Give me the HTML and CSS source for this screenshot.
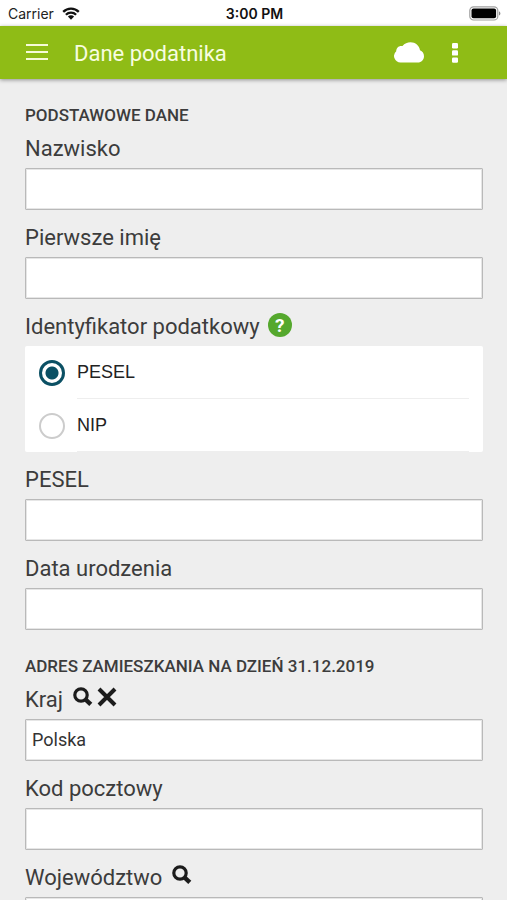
FILE: index.html
```html
<!DOCTYPE html>
<html lang="pl">
<head>
<meta charset="utf-8">
<meta name="viewport" content="width=device-width, initial-scale=1">
<title>Dane podatnika</title>
<link rel="stylesheet" href="styles.css">
</head>
<body>
<svg class="sprite" aria-hidden="true">
  <symbol id="search" viewBox="0 0 20 20">
    <circle cx="8" cy="8" r="6.200" fill="none" stroke="currentColor" stroke-width="3.200"/>
    <path d="M12.400 12.400l5.400 5" fill="none" stroke="currentColor" stroke-width="4.400"/>
  </symbol>
</svg>
<div class="status">
  <div class="carrier">
    <span>Carrier</span>
    <svg width="18" height="13" viewBox="0 0 18 13" aria-hidden="true">
      <g fill="none" stroke="#111" stroke-width="2.3">
        <path d="M1.2 4.9a11 11 0 0 1 15.6 0"/>
        <path d="M3.9 7.8a7.2 7.2 0 0 1 10.2 0"/>
      </g>
      <path d="M9 12.8L5.9 9.6a4.4 4.4 0 0 1 6.2 0z" fill="#111"/>
    </svg>
  </div>
  <div class="time">3:00 PM</div>
  <div class="battery">
    <svg width="32" height="15" viewBox="0 0 32 15" aria-hidden="true">
      <rect x="0.8" y="0.8" width="28" height="13.200" rx="3.8" fill="#fff" stroke="#a0a0a0" stroke-width="1.2"/>
      <rect x="2.500" y="2.500" width="24.600" height="9.800" rx="2" fill="#000"/>
      <path d="M30 5.200C31.900 6 31.900 8.800 30 9.600z" fill="#888"/>
    </svg>
  </div>
</div>
<header class="bar">
  <button class="icon-button" aria-label="Menu">
    <svg width="22" height="18" viewBox="0 0 22 18"><path d="M0 1h22M0 8h22M0 15h22" stroke="#f6fbd8" stroke-width="2"/></svg>
  </button>
  <h1>Dane podatnika</h1>
  <button class="icon-button cloud" aria-label="Chmura">
    <svg width="30" height="21" viewBox="0 0 30 21"><path d="M6.500 20.500A6.500 6.500 0 0 1 2.200 9.200C2.200 5.500 5.300 3.200 8.500 4.100C10.500 1.500 13.500 0.300 16.500 0.300C21.500 0.300 25.300 3.800 26 8.300C28.500 9.300 30 11.500 30 14.200C30 17.700 27.300 20.500 23.800 20.500z" fill="#fff"/></svg>
  </button>
  <button class="icon-button more" aria-label="Więcej">
    <svg width="6" height="20" viewBox="0 0 6 20"><g fill="#fff"><rect width="6" height="5.400" rx="1.200"/><rect y="7.200" width="6" height="5.400" rx="1.200"/><rect y="14.400" width="6" height="5.400" rx="1.200"/></g></svg>
  </button>
</header>
<main>
  <form>
    <h2>PODSTAWOWE DANE</h2>
    <div class="label-row"><label for="surname">Nazwisko</label></div>
    <input class="text" id="surname" type="text">
    <div class="label-row"><label for="name">Pierwsze imię</label></div>
    <input class="text" id="name" type="text">
    <div class="label-row">
      <span id="ident">Identyfikator podatkowy</span>
      <button class="help" type="button" aria-label="Pomoc">?</button>
    </div>
    <div class="options" role="radiogroup" aria-labelledby="ident">
      <label class="option"><input type="radio" name="ident" checked><span>PESEL</span></label>
      <label class="option"><input type="radio" name="ident"><span>NIP</span></label>
    </div>
    <div class="label-row"><label for="pesel">PESEL</label></div>
    <input class="text" id="pesel" type="text">
    <div class="label-row"><label for="birth">Data urodzenia</label></div>
    <input class="text" id="birth" type="text">
    <h2>ADRES ZAMIESZKANIA NA DZIEŃ 31.12.2019</h2>
    <div class="label-row">
      <label for="country">Kraj</label>
      <span class="tools">
        <button type="button" aria-label="Szukaj kraju"><svg width="20" height="20"><use href="#search"/></svg></button>
        <button type="button" aria-label="Wyczyść kraj"><svg width="20" height="20" viewBox="0 0 20 20"><path d="M2 2l16 16M18 2L2 18" stroke="currentColor" stroke-width="4"/></svg></button>
      </span>
    </div>
    <input class="text" id="country" type="text" value="Polska">
    <div class="label-row"><label for="zip">Kod pocztowy</label></div>
    <input class="text" id="zip" type="text">
    <div class="label-row">
      <label for="region">Województwo</label>
      <span class="tools">
        <button type="button" aria-label="Szukaj województwa"><svg width="20" height="20"><use href="#search"/></svg></button>
      </span>
    </div>
    <input class="text" id="region" type="text">
  </form>
</main>
</body>
</html>
```
FILE: styles.css
```css
* {
  box-sizing: border-box;
}

body {
  margin: 0;
  height: 100vh;
  display: flex;
  flex-direction: column;
  overflow: hidden;
  background: #eee;
  color: #3c3c3c;
  font-family: Roboto, sans-serif;
}

.sprite {
  display: none;
}

button {
  display: flex;
  align-items: center;
  justify-content: center;
  margin: 0;
  padding: 0;
  border: 0;
  background: none;
  color: inherit;
}

.status {
  display: grid;
  grid-template-columns: 1fr auto 1fr;
  align-items: center;
  flex: none;
  height: 26px;
  padding: 1px 6px 0 8px;
  background: #fff;
  color: #222;
  font-family: Inter, sans-serif;
  font-size: 14px;
}

.carrier {
  display: flex;
  align-items: center;
  gap: 8px;
}

.time {
  color: #111;
  font-weight: 600;
}

.battery {
  display: flex;
  justify-content: flex-end;
}

.bar {
  display: flex;
  align-items: center;
  flex: none;
  height: 53px;
  padding: 0 49px 0 26px;
  background: #8fbc16;
  box-shadow: 0 1px 4px rgba(0, 0, 0, 0.4);
  z-index: 1;
}

.bar h1 {
  flex: 1;
  margin: 0 0 0 26px;
  padding-top: 2px;
  color: #f8fde0;
  font-size: 22px;
  font-weight: 400;
  line-height: 28px;
}

.more {
  margin-left: 28px;
}

main {
  flex: 1;
  min-height: 0;
  overflow-y: auto;
  scrollbar-width: none;
  padding: 0 24px 26px 25px;
}

h2 {
  margin: 26px 0 0;
  font-size: 17px;
  font-weight: 500;
  line-height: 20px;
}

.label-row {
  display: flex;
  align-items: center;
  height: 26px;
  margin: 15px 0 6px;
  font-size: 22px;
  line-height: 26px;
}

h2 + .label-row {
  margin-top: 11px;
}

.text {
  display: block;
  width: 100%;
  height: 42px;
  padding: 0 6px 2px;
  border: 1px solid #b9b9b9;
  border-radius: 1px;
  background: #fff;
  box-shadow: inset 0 0 0 1px #e6e6e6;
  color: #333;
  font: 18px Roboto, sans-serif;
}

.help {
  width: 24px;
  height: 24px;
  margin: 0 0 4px 8px;
  border-radius: 50%;
  background: #55a82d;
  color: #fff;
  font: 700 19px Roboto, sans-serif;
}

.tools {
  display: flex;
  gap: 4px;
  margin: 0 0 6px 10px;
  color: #1c1c1c;
}

.options {
  margin-bottom: 14px;
  background: #fff;
  border-radius: 2px;
}

.option {
  display: flex;
  align-items: center;
  height: 53px;
  padding-left: 14px;
  color: #222;
  font-family: "Liberation Sans", sans-serif;
  font-size: 18px;
}

.option input {
  appearance: none;
  flex: none;
  width: 26px;
  height: 26px;
  margin: 0;
  border: 2px solid #ccc;
  border-radius: 50%;
}

.option input:checked {
  border: 3px solid #0b5064;
  background: radial-gradient(circle, #0b5064 6px, #fff 7px);
}

.option span {
  flex: 1;
  margin: 0 14px 0 12px;
  line-height: 52px;
  border-bottom: 1px solid #eee;
}
```
